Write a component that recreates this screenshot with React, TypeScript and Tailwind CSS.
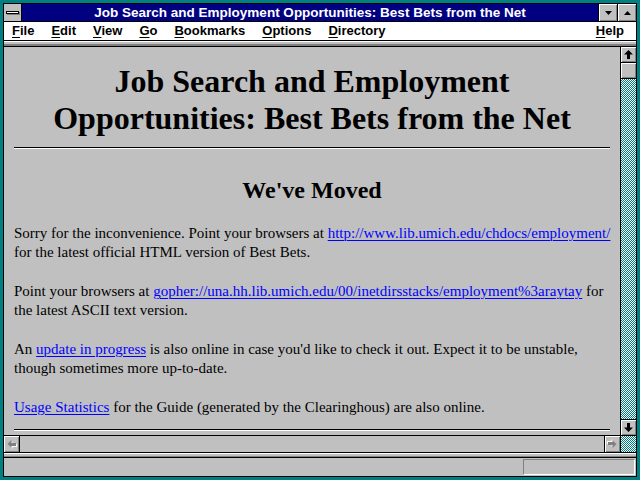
import React from "react";

const bevel = "bg-[#c0c0c0] shadow-[inset_1px_1px_0_#ffffff,inset_-1px_-1px_0_#808080]";
const checker =
  "bg-[repeating-conic-gradient(#008080_0%_25%,#ffffff_0%_50%)] bg-[length:2px_2px]";

function ArrowV({ up }: { up: boolean }) {
  return (
    <svg width="9" height="9" viewBox="0 0 9 9" className={up ? "" : "rotate-180"}>
      <path d="M4.5 0 L9 4.5 L6 4.5 L6 9 L3 9 L3 4.5 L0 4.5 Z" fill="#000" />
    </svg>
  );
}

function ArrowH({ left }: { left: boolean }) {
  return (
    <svg width="11" height="10" viewBox="0 0 11 10" className={left ? "" : "rotate-180"}>
      <path d="M5.5 1 L1.5 5 L5.5 9 L5.5 7 L10 7 L10 4 L5.5 4 Z" fill="#ffffff" transform="translate(1,1)" />
      <path d="M5.5 1 L1.5 5 L5.5 9 L5.5 7 L10 7 L10 4 L5.5 4 Z" fill="#808080" />
    </svg>
  );
}

function Link({ children }: { children: React.ReactNode }) {
  return <a className="text-[#0000ff] underline decoration-1 underline-offset-[2px]">{children}</a>;
}

function MenuItem({ first, rest }: { first: string; rest: string }) {
  return (
    <span>
      <u className="underline-offset-[2px]">{first}</u>
      {rest}
    </span>
  );
}

export default function App() {
  return (
    <div className="w-[640px] h-[480px] bg-[#008080] p-[3px] font-['Liberation_Sans',Arial,sans-serif] overflow-hidden">
      <div className="w-full h-full border border-black flex flex-col bg-[#c0c0c0]">
        {/* Title bar */}
        <div className="h-[18px] flex border-b border-black shrink-0">
          <div className="w-[18px] border-r border-black bg-[#c0c0c0] flex items-center justify-center">
            <div className="w-[13px] h-[3px] bg-white border border-black shadow-[1px_1px_0_#808080]" />
          </div>
          <div className="flex-1 bg-[#000080] text-white font-bold text-[13.5px] leading-[17px] text-center whitespace-nowrap overflow-hidden">
            Job Search and Employment Opportunities: Best Bets from the Net
          </div>
          <div className={`w-[19px] border-l border-black ${bevel} flex items-center justify-center`}>
            <svg width="7" height="4" viewBox="0 0 7 4">
              <path d="M0 0 L7 0 L3.5 4 Z" fill="#000" />
            </svg>
          </div>
          <div className={`w-[19px] border-l border-black ${bevel} flex items-center justify-center`}>
            <svg width="7" height="4" viewBox="0 0 7 4">
              <path d="M0 4 L7 4 L3.5 0 Z" fill="#000" />
            </svg>
          </div>
        </div>

        {/* Menu bar */}
        <div className="h-[18px] bg-white flex items-center pl-[8px] pr-[12px] text-[13px] font-bold text-black leading-[18px] shrink-0">
          <div className="flex gap-[17px]">
            <MenuItem first="F" rest="ile" />
            <MenuItem first="E" rest="dit" />
            <MenuItem first="V" rest="iew" />
            <MenuItem first="G" rest="o" />
            <MenuItem first="B" rest="ookmarks" />
            <MenuItem first="O" rest="ptions" />
            <MenuItem first="D" rest="irectory" />
          </div>
          <div className="ml-auto">
            <MenuItem first="H" rest="elp" />
          </div>
        </div>

        {/* Separator strip */}
        <div className="h-[7px] shrink-0 border-t border-b border-black bg-[#c0c0c0] shadow-[inset_0_1px_0_#ffffff,inset_0_-2px_0_#808080]" />

        {/* Main area */}
        <div className="flex-1 flex min-h-0">
          <div className="flex-1 flex flex-col min-w-0">
            <div className="flex-1 overflow-hidden px-[10px] font-['Liberation_Serif','Times_New_Roman',serif] text-black">
              <h1 className="mt-[16px] text-[32px] leading-[37px] font-bold text-center">
                Job Search and Employment
                <br />
                Opportunities: Best Bets from the Net
              </h1>
              <div className="mt-[10px] h-[2px] border-t border-black border-b border-b-white" />
              <h2 className="mt-[27px] text-[24px] leading-[28px] font-bold text-center">We've Moved</h2>
              <div className="mt-[20px] text-[15px] leading-[19px] whitespace-nowrap">
                <p>
                  Sorry for the inconvenience. Point your browsers at{" "}
                  <Link>http://www.lib.umich.edu/chdocs/employment/</Link>
                  <br />
                  for the latest official HTML version of Best Bets.
                </p>
                <p className="mt-[20px]">
                  Point your browsers at{" "}
                  <Link>gopher://una.hh.lib.umich.edu/00/inetdirsstacks/employment%3araytay</Link> for
                  <br />
                  the latest ASCII text version.
                </p>
                <p className="mt-[20px]">
                  An <Link>update in progress</Link> is also online in case you'd like to check it out. Expect it to
                  be unstable,
                  <br />
                  though sometimes more up-to-date.
                </p>
                <p className="mt-[20px]">
                  <Link>Usage Statistics</Link> for the Guide (generated by the Clearinghous) are also online.
                </p>
              </div>
              <div className="mt-[12px] h-[2px] border-t border-black border-b border-b-white" />
            </div>
            {/* Horizontal scrollbar */}
            <div className="h-[17px] flex border-t border-black shrink-0">
              <div className={`w-[16px] border-r border-black ${bevel} flex items-center justify-center`}>
                <ArrowH left />
              </div>
              <div className="flex-1 bg-[#c0c0c0]" />
              <div className={`w-[16px] border-l border-black ${bevel} flex items-center justify-center`}>
                <ArrowH left={false} />
              </div>
            </div>
          </div>
          {/* Vertical scrollbar */}
          <div className="w-[16px] flex flex-col border-l border-black shrink-0">
            <div className={`h-[16px] border-b border-black ${bevel} flex items-center justify-center`}>
              <ArrowV up />
            </div>
            <div className={`h-[16px] border-b border-black ${bevel}`} />
            <div className={`flex-1 ${checker}`} />
            <div className={`h-[17px] border-t border-b border-black ${bevel} flex items-center justify-center`}>
              <ArrowV up={false} />
            </div>
            <div className={`h-[16px] ${checker}`} />
          </div>
        </div>

        {/* Separator strip */}
        <div className="h-[6px] shrink-0 border-t border-b border-black bg-[#c0c0c0] shadow-[inset_0_1px_0_#ffffff,inset_0_-1px_0_#808080]" />

        {/* Status bar */}
        <div className="h-[18px] shrink-0 flex items-center justify-end pr-[1px] bg-[#c0c0c0]">
          <div className="w-[112px] h-[16px] border-t border-l border-[#808080] border-b border-r border-b-white border-r-white" />
        </div>
      </div>
    </div>
  );
}
